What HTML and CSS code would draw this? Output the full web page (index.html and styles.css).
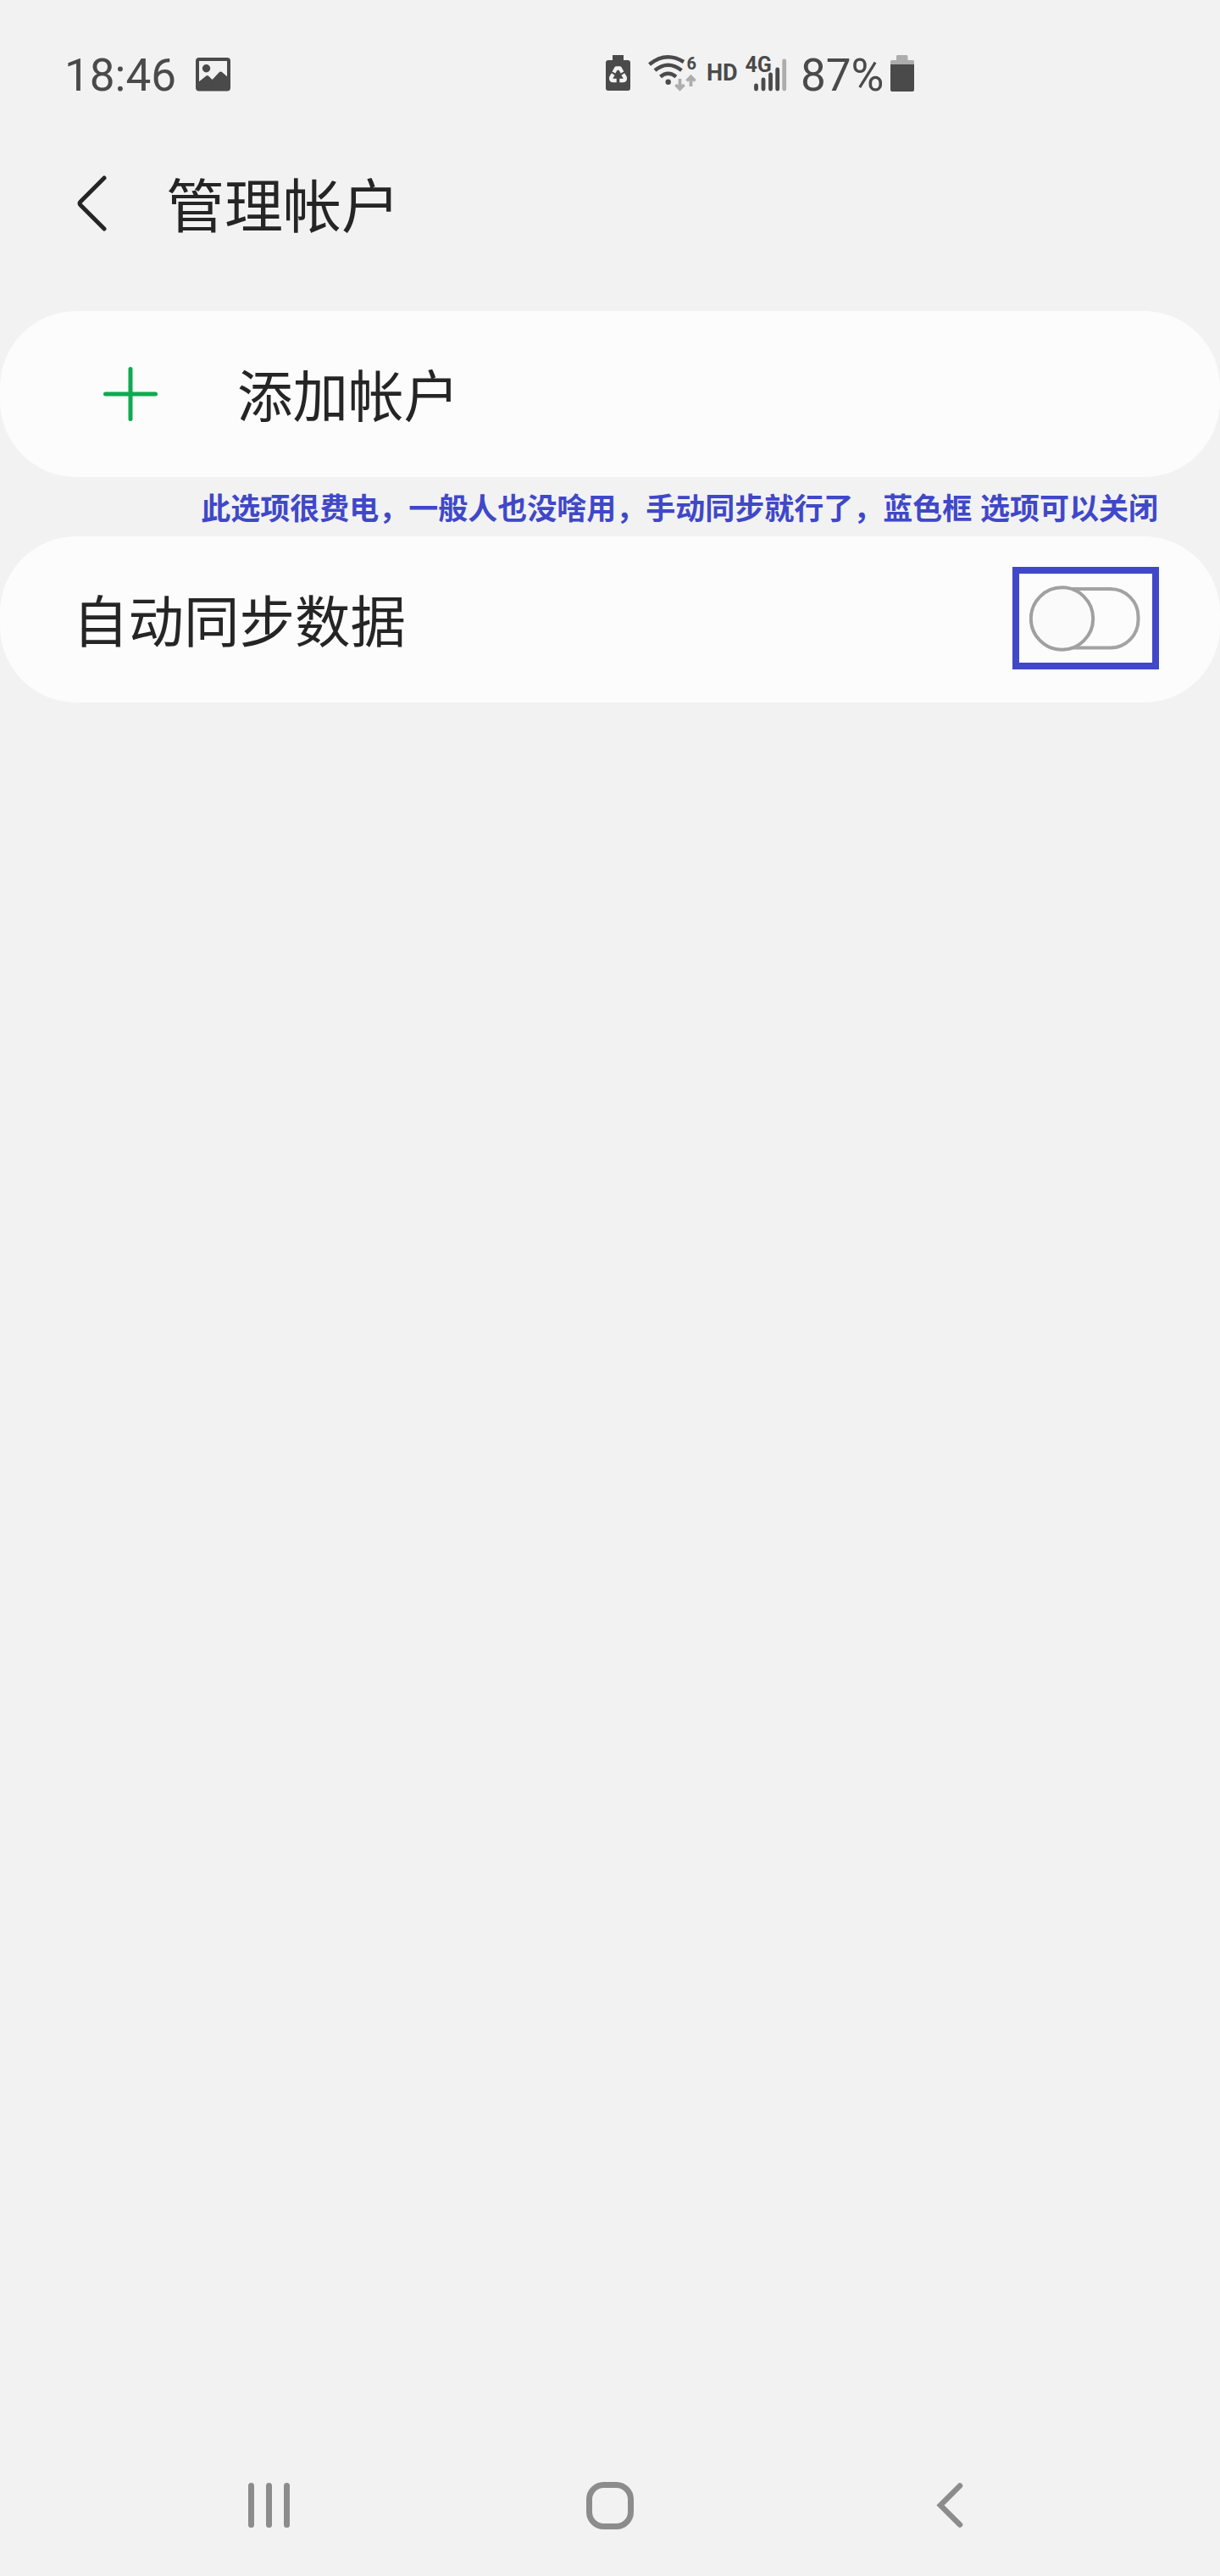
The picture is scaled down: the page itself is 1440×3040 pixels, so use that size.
FILE: index.html
```
<!DOCTYPE html>
<html lang="zh-CN">
<head>
  <meta charset="utf-8">
  <title>管理帐户</title>
  <link rel="stylesheet" href="styles.css">
</head>
<body>
  <div class="screen">
    <div class="status-bar">
      <span class="status-text">18:46</span>
      <svg class="icon-picture" width="42" height="40" viewBox="0 0 42 40">
        <rect x="2" y="2" width="37" height="35.500" rx="2" fill="none" stroke="#4a4a4a" stroke-width="4"/>
        <circle cx="12.500" cy="12.700" r="4.700" fill="#4a4a4a"/>
        <path d="M3 29L12.500 21.500Q14 20.500 15.500 22L19.500 26L27.500 17.500Q29.500 15.700 31.500 17.500L39 24V37H3z" fill="#4a4a4a"/>
      </svg>

      <!-- battery saver, wifi, HD, signal -->
      <svg class="icon-group" width="230" height="80" viewBox="700 50 230 80">
        <path d="M723 65h13v6h5q3 0 3 3v30q0 3 -3 3h-23q-3 0 -3 -3v-30q0 -3 3 -3h5z" fill="#4a4a4a"/>
        <g fill="none" stroke="#f2f2f2" stroke-width="4.400" stroke-linejoin="round">
          <path d="M724.500 85.500L727.300 80.500H731.700L734.500 85.500"/>
          <path d="M723.700 87.500L721.300 91.500Q720.500 95 723.500 95H727.700"/>
          <path d="M735.300 87.500L737.700 91.500Q738.500 95 735.500 95H731.300"/>
        </g>
        <circle cx="788.700" cy="96.700" r="3.200" fill="#4a4a4a"/>
        <g fill="none" stroke="#4a4a4a" stroke-width="4.500">
          <path d="M766.500 76Q786 60 807 73"/>
          <path d="M773 83Q788.500 70.500 804.500 83"/>
          <path d="M779.500 90.500Q788.500 83 798 90.500"/>
        </g>
        <g fill="none" stroke="#adadad" stroke-width="3.800">
          <path d="M802.500 93V105M797.500 100L802.500 105L807.500 100"/>
          <path d="M815.500 102V90M810.500 95.500L815.500 90.500L820.500 95.500"/>
        </g>
        <g class="status-tag">
          <text x="810.500" y="82" font-size="20">6</text>
          <text x="834" y="95" font-size="27">HD</text>
          <text x="879.500" y="85" font-size="25">4G</text>
        </g>
        <g stroke="#4a4a4a" stroke-width="4.800" stroke-linecap="round">
          <path d="M892.500 101V105M901 94V105M909.500 88V105M917.700 82V105"/>
          <path d="M925.700 72V105" stroke="#adadad"/>
        </g>
      </svg>
      <span class="status-text battery-text">87%</span>
      <svg class="icon-battery" width="28" height="43" viewBox="0 0 28 43">
        <path d="M8 0h11q1.500 0 1.500 1.500V6h6q1.500 0 1.500 1.500V12H0V7.500Q0 6 1.500 6H7V1.500Q7 0 8 0z" fill="#adadad"/>
        <path d="M0 11h28v30q0 2 -2 2H2q-2 0 -2 -2z" fill="#4a4a4a"/>
      </svg>
    </div>

    <div class="header">
      <svg width="36" height="68" viewBox="0 0 36 68">
        <path d="M32 4L4 32Q2 34 4 36L32 64" fill="none" stroke="#252525" stroke-width="5" stroke-linecap="round"/>
      </svg>
      <h1 class="title">管理帐户</h1>
    </div>

    <div class="card add-account">
      <svg width="64" height="64" viewBox="0 0 64 64">
        <path d="M2.500 32H61.500M32 2.500V61.500" stroke="#0fa950" stroke-width="5" stroke-linecap="round"/>
      </svg>
      <span class="label">添加帐户</span>
    </div>

    <div class="note">此选项很费电，一般人也没啥用，手动同步就行了，蓝色框 选项可以关闭</div>

    <div class="card auto-sync">
      <span class="label">自动同步数据</span>
      <div class="switch-frame">
        <svg width="133" height="78" viewBox="0 0 133 78">
          <rect x="20" y="4" width="108.500" height="69.500" rx="33" fill="#fcfcfc" stroke="#a3a3a3" stroke-width="4"/>
          <circle cx="38.500" cy="39" r="36.700" fill="#fafafa" stroke="#a0a0a0" stroke-width="4"/>
        </svg>
      </div>
    </div>

    <div class="nav-bar">
      <svg class="nav-recents" width="49" height="53" viewBox="0 0 49 53">
        <path d="M3.500 3.500V49.500M24.500 3.500V49.500M45.500 3.500V49.500" stroke="#8c8c8c" stroke-width="7" stroke-linecap="round"/>
      </svg>
      <svg class="nav-home" width="56" height="56" viewBox="0 0 56 56">
        <rect x="3.500" y="3.500" width="49" height="49" rx="17" fill="none" stroke="#8c8c8c" stroke-width="7"/>
      </svg>
      <svg class="nav-back" width="32" height="53" viewBox="0 0 32 53">
        <path d="M28 3.500L5 26.500L28 49.500" fill="none" stroke="#8c8c8c" stroke-width="6.500" stroke-linecap="round"/>
      </svg>
    </div>
  </div>
</body>
</html>
```
FILE: styles.css
```
:root {
  --bg: #f2f2f2;
  --card-bg: #fcfcfc;
  --text-dark: #252525;
  --status: #4a4a4a;
  --note: #4048c8;
}

body {
  margin: 0;
  background-color: var(--bg);
  color: var(--text-dark);
  font-family: Roboto, 'Noto Sans CJK SC', sans-serif;
}

svg {
  display: block;
  flex-shrink: 0;
}

.screen {
  display: flex;
  flex-direction: column;
  width: 1440px;
  height: 3040px;
}

.status-bar {
  display: flex;
  align-items: center;
  height: 176px;
  box-sizing: border-box;
  padding: 4px 0 0 76px;
}

.status-text {
  width: 154px;
  margin-bottom: 2px;
  font-size: 53px;
  line-height: 62px;
  color: var(--status);
}

.icon-picture {
  margin: 0 0 4px 1px;
}

.icon-group {
  margin-left: 427px;
}

.status-tag {
  font-weight: 700;
  fill: var(--status);
}

.battery-text {
  width: 106px;
  margin-left: 15px;
}

.icon-battery {
  margin-bottom: 7px;
}

.header {
  display: flex;
  align-items: center;
  height: 128px;
  margin-bottom: 63px;
  padding-left: 91px;
}

.title {
  margin: 0 0 0 69px;
  padding-top: 12px;
  font-size: 69px;
  font-weight: 400;
  line-height: 100px;
}

.card {
  display: flex;
  align-items: center;
  height: 196px;
  box-sizing: border-box;
  border-radius: 90px;
  background-color: var(--card-bg);
  font-size: 65.5px;
  line-height: 96px;
}

.label {
  padding-top: 10px;
}

.add-account {
  gap: 94px;
  padding-left: 122px;
}

.note {
  height: 70px;
  padding-right: 73px;
  text-align: right;
  font-size: 35px;
  font-weight: 700;
  line-height: 78px;
  word-spacing: 1px;
  color: var(--note);
  white-space: nowrap;
}

.auto-sync {
  justify-content: space-between;
  padding: 0 72px 0 86px;
}

.switch-frame {
  display: flex;
  align-items: center;
  justify-content: center;
  width: 173px;
  height: 121px;
  box-sizing: border-box;
  margin-bottom: 3px;
  border: 8px solid var(--note);
}

.nav-bar {
  display: flex;
  align-items: center;
  height: 167px;
  margin-top: auto;
  padding-left: 293px;
}

.nav-home {
  margin-left: 350px;
}

.nav-back {
  margin-left: 357px;
}
```
